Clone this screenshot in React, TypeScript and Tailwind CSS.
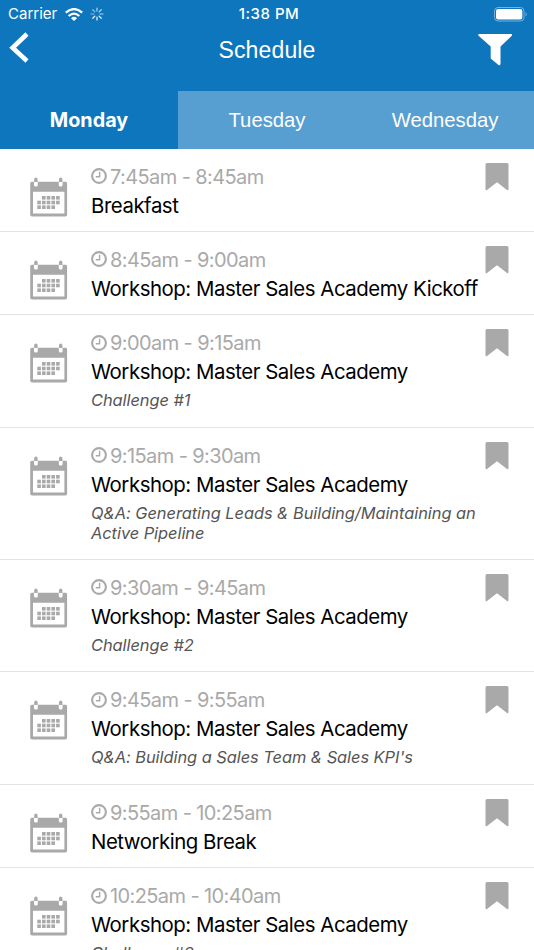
type Session = { time: string; title: string; note?: string[] };

const sessions: Session[] = [
  { time: "7:45am - 8:45am", title: "Breakfast" },
  { time: "8:45am - 9:00am", title: "Workshop: Master Sales Academy Kickoff" },
  { time: "9:00am - 9:15am", title: "Workshop: Master Sales Academy", note: ["Challenge #1"] },
  {
    time: "9:15am - 9:30am",
    title: "Workshop: Master Sales Academy",
    note: ["Q&A: Generating Leads & Building/Maintaining an", "Active Pipeline"],
  },
  { time: "9:30am - 9:45am", title: "Workshop: Master Sales Academy", note: ["Challenge #2"] },
  {
    time: "9:45am - 9:55am",
    title: "Workshop: Master Sales Academy",
    note: ["Q&A: Building a Sales Team & Sales KPI's"],
  },
  { time: "9:55am - 10:25am", title: "Networking Break" },
  { time: "10:25am - 10:40am", title: "Workshop: Master Sales Academy", note: ["Challenge #3"] },
];

// Day squares on the calendar face: [x, y]
const days: [number, number][] = [
  [12, 19], [16.7, 19], [21.4, 19], [26.1, 19],
  [7.3, 23.7], [12, 23.7], [16.7, 23.7], [21.4, 23.7], [26.1, 23.7],
  [7.3, 28.4], [12, 28.4], [16.7, 28.4], [21.4, 28.4],
];

function CalendarIcon() {
  return (
    <svg className="block h-10 w-[38px]" viewBox="0 0 38 40" fill="#a9a9a9">
      <path
        fillRule="evenodd"
        d="M2 4.7H35.8Q37.1 4.7 37.1 6.5V37.7Q37.1 39.5 35.3 39.5H2Q.2 39.5 .2 37.7V6.5Q.2 4.7 2 4.7ZM3 14.8V36.5H34.4V14.8Z"
      />
      <rect x="4" y="3" width="3.8" height="6.6" rx="1.6" fill="#fff" />
      <rect x="28.8" y="3" width="3.8" height="6.6" rx="1.6" fill="#fff" />
      <path d="M4.2 5V2Q4.4 .5 5.9 .5Q7.4 .5 7.6 2V5ZM29 5V2Q29.2 .5 30.7 .5Q32.2 .5 32.4 2V5Z" />
      {days.map(([x, y]) => (
        <rect key={`${x}-${y}`} x={x} y={y} width="3.6" height="3.6" />
      ))}
    </svg>
  );
}

function ClockIcon() {
  return (
    <svg className="mb-px block size-4" viewBox="0 0 16 16" fill="none" stroke="#a9a9a9">
      <circle cx="8" cy="8" r="6.9" strokeWidth="2.1" />
      <path d="M8.6 3.8V8.8H4.8" strokeWidth="1.4" />
    </svg>
  );
}

function Row({ time, title, note = [] }: Session) {
  const height = note.length === 0 ? "h-[83.4px]" : note.length === 1 ? "h-[112.4px]" : "h-[132.3px]";
  return (
    <li className={`flex shrink-0 border-b border-[#e2e2e2] ${height}`}>
      <div className="w-[91px] shrink-0 pt-[28px] pl-[29.5px]">
        <CalendarIcon />
      </div>
      <div className="min-w-0 flex-1 whitespace-nowrap pt-[14px]">
        <div className="flex h-7 items-center gap-[3px] text-[20px] leading-7 text-[#a9a9a9]">
          <ClockIcon />
          <span className="tracking-[-0.6px]">{time}</span>
        </div>
        <div className="h-7 pt-px text-[20.4px] leading-7 tracking-[-0.46px] text-black">{title}</div>
        <div className="pt-[5px] text-[16.4px] leading-5 tracking-[-0.04px] text-[#555] italic">
          {note.map((line) => (
            <div key={line}>{line}</div>
          ))}
        </div>
      </div>
      <div className="w-[49px] shrink-0 pt-[14px]">
        <svg className="block h-7 w-6" viewBox="0 0 24 28" fill="#a9a9a9">
          <path d="M2 0H22Q23.5 0 23.5 1.5V26.2Q23.5 28 22 27L12 19.3L2 27Q.5 28 .5 26.2V1.5Q.5 0 2 0Z" />
        </svg>
      </div>
    </li>
  );
}

function StatusBar() {
  return (
    <div className="grid h-7 grid-cols-3 items-center text-[15px] text-white">
      <div className="flex items-center pl-2">
        <span>Carrier</span>
        <svg className="ml-[8px] h-[13px] w-[18px]" viewBox="0 0 18 13" fill="none" stroke="#fff" strokeWidth="2.3">
          <path d="M.8 4.7Q9-2.5 17.2 4.7M3.7 8Q9 3.3 14.3 8" />
          <path d="M6 10.2Q9 7.5 12 10.2L9 13Z" fill="#fff" stroke="none" />
        </svg>
        <svg className="ml-[7px] size-[14px]" viewBox="-7 -7 14 14" stroke="#fff" strokeWidth="1.2" strokeLinecap="round">
          {[0, 45, 90, 135, 180, 225, 270, 315].map((a) => (
            <path key={a} d="M0-3V-6" transform={`rotate(${a})`} opacity={a >= 135 && a <= 225 ? 0.95 : a < 135 ? 0.7 : 0.5} />
          ))}
        </svg>
      </div>
      <div className="pl-1 text-center font-medium tracking-[0.5px]">1:38 PM</div>
      <div className="flex justify-end pr-[6px]">
        <svg className="h-[15px] w-[34px]" viewBox="0 0 34 15" fill="none">
          <rect x=".5" y=".5" width="29.5" height="13.5" rx="3.5" stroke="#78b2dc" />
          <rect x="2" y="2" width="26.3" height="10.5" rx="2" fill="#fff" />
          <path d="M31.6 5Q34 7.3 31.6 9.6Z" fill="#78b2dc" />
        </svg>
      </div>
    </div>
  );
}

export default function App() {
  return (
    <div className="flex h-[950px] w-[534px] flex-col overflow-hidden bg-white font-['Inter',sans-serif]">
      <header className="h-[148.5px] shrink-0 bg-[#0e76bd] text-white">
        <StatusBar />
        <div className="flex h-[62.5px] items-start justify-between font-['Liberation_Sans',sans-serif]">
          <svg className="mt-1 ml-[9px] h-8 w-[60px]" viewBox="0 0 60 32" fill="none" stroke="#fff" strokeWidth="4.6">
            <path d="M18 2L3.6 15.8L18 29" />
          </svg>
          <h1 className="pt-[7px] text-[23px] leading-[30px] tracking-[0.15px]">Schedule</h1>
          <svg className="mt-[6px] mr-[21px] h-8 w-12" viewBox="0 0 48 32" fill="#fff">
            <path d="M14.2 0H46.3Q47.5 0 47 1.6L35.5 12.5V30Q35 31.8 33.5 31L25.7 24.5V12.5L13.3 1.6Q12.8 .2 14.2 0Z" />
          </svg>
        </div>
        <nav className="grid h-[58px] grid-cols-3 text-center font-['Liberation_Sans',sans-serif] text-[20.3px] leading-[57px]">
          <div className="pt-px font-['Inter',sans-serif] text-[19.8px] font-bold">Monday</div>
          <div className="bg-[#579ed1] pt-px">Tuesday</div>
          <div className="bg-[#579ed1] pt-px">Wednesday</div>
        </nav>
      </header>
      <ul className="flex flex-1 flex-col overflow-hidden">
        {sessions.map((s) => (
          <Row key={s.time} {...s} />
        ))}
      </ul>
    </div>
  );
}
